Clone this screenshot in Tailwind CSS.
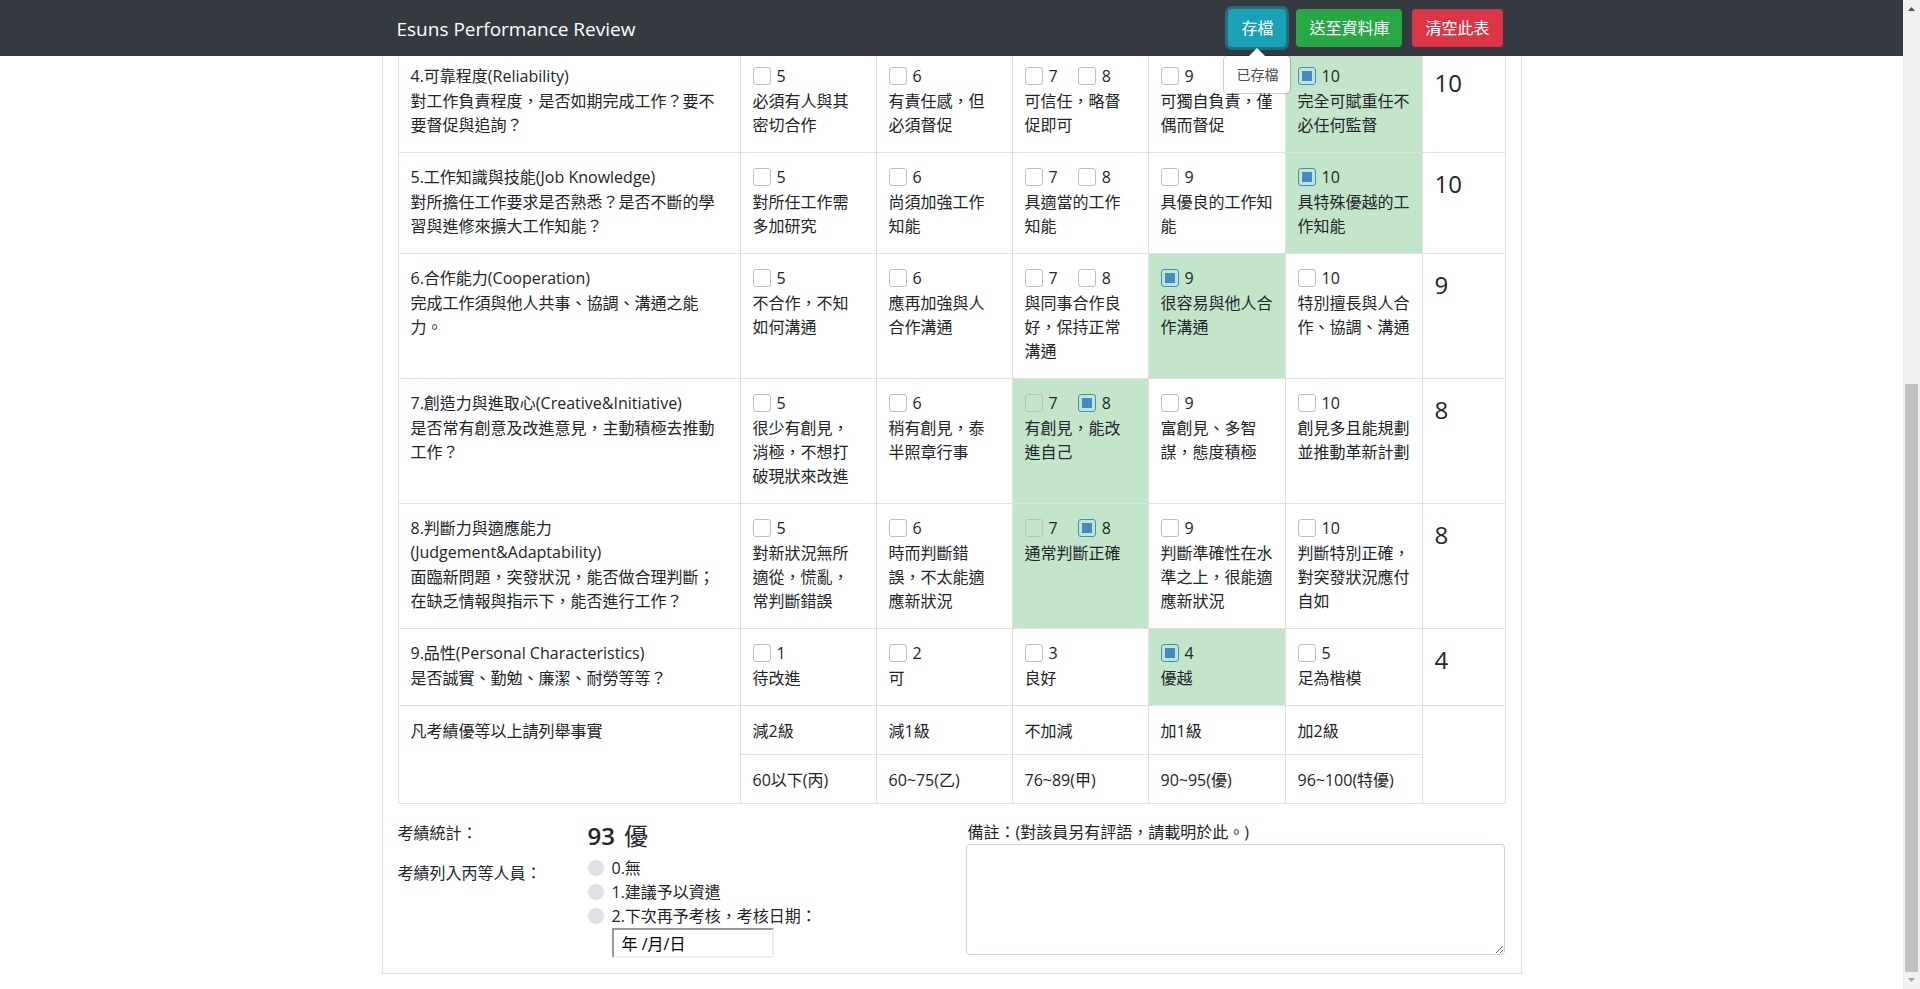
<!DOCTYPE html>
<html lang="zh-Hant">
<head>
<meta charset="utf-8">
<title>Esuns Performance Review</title>
<script src="https://cdn.jsdelivr.net/npm/@tailwindcss/browser@4"></script>
</head>
<body class="flex h-screen overflow-hidden bg-white font-['Open_Sans','Noto_Sans_CJK_TC',sans-serif] text-base leading-6 text-[#212529]">
<div class="flex min-w-0 flex-1 flex-col">
  <header class="relative z-10 h-14 shrink-0 bg-[#343a40]">
    <nav class="mx-auto flex h-full max-w-[1140px] items-center justify-between pr-[19px] pl-[15px]">
      <a href="#" class="pt-[2px] text-[19px] leading-[30px] text-white">Esuns Performance Review</a>
      <div class="flex gap-[10px]">
        <div class="relative">
          <button type="button" class="block h-[38px] rounded bg-[#17a2b8] px-[13px] text-white ring-3 ring-[#17a2b8]/50">存檔</button>
          <div role="tooltip" class="absolute top-[46px] left-1/2 -translate-x-1/2 rounded-[5px] border border-black/20 bg-white bg-clip-padding px-3 py-2 text-sm leading-[21px] whitespace-nowrap text-[#4b4f53]">
            <svg class="absolute -top-2 left-1/2 h-2 w-4 -translate-x-1/2" viewBox="0 0 16 8" aria-hidden="true"><path d="M0 8 8 0l8 8z" fill="#fff"/></svg>已存檔
          </div>
        </div>
        <button type="button" class="h-[38px] rounded bg-[#28a745] px-[13px] text-white">送至資料庫</button>
        <button type="button" class="h-[38px] rounded bg-[#dc3545] px-[13px] text-white">清空此表</button>
      </div>
    </nav>
  </header>
  <main class="mx-auto w-full max-w-[1140px] border-x border-b border-[#dee2e6] px-[15px] pb-[15px]">
    <table class="w-full table-fixed border-separate border-spacing-0 border-l border-[#dee2e6]">
      <colgroup><col><col class="w-[136px]"><col class="w-[136px]"><col class="w-[136px]"><col class="w-[137px]"><col class="w-[137px]"><col class="w-[83px]"></colgroup>
      <tbody id="rows"></tbody>
      <tbody class="[&_td]:border-r [&_td]:border-b [&_td]:border-[#dee2e6] [&_td]:px-3 [&_td]:pt-[13px] [&_td]:pb-[11px] [&_td]:align-top">
        <tr><td rowspan="2">凡考績優等以上請列舉事實</td><td>減2級</td><td>減1級</td><td>不加減</td><td>加1級</td><td>加2級</td><td rowspan="2"></td></tr>
        <tr><td>60以下(丙)</td><td>60~75(乙)</td><td>76~89(甲)</td><td>90~95(優)</td><td>96~100(特優)</td></tr>
      </tbody>
    </table>
    <div class="mt-[14px] flex">
      <div class="flex-1">
        <div class="flex"><div class="w-[190px] pt-[3px]">考績統計：</div><div class="flex gap-[9px] text-2xl leading-9"><b class="font-semibold">93</b><span>優</span></div></div>
        <fieldset class="mt-[2px] flex">
          <legend class="float-left w-[190px] pt-[5px]">考績列入丙等人員：</legend>
          <div>
            <label class="flex items-center gap-2"><input type="radio" name="grade" class="size-4 appearance-none rounded-full bg-[#dee2e6] checked:bg-[#007bff]">0.無</label>
            <label class="flex items-center gap-2"><input type="radio" name="grade" class="size-4 appearance-none rounded-full bg-[#dee2e6] checked:bg-[#007bff]">1.建議予以資遣</label>
            <label class="flex items-center gap-2"><input type="radio" name="grade" class="size-4 appearance-none rounded-full bg-[#dee2e6] checked:bg-[#007bff]">2.下次再予考核，考核日期：</label>
            <input type="text" aria-label="考核日期" value="年 /月/日" class="ml-6 block h-[30px] w-[162px] border-2 border-t-[#9a9a9a] border-r-[#eee] border-b-[#eee] border-l-[#9a9a9a] px-2 text-black">
          </div>
        </fieldset>
      </div>
      <div class="flex w-[540px] flex-col pr-px">
        <label for="remark" class="px-[2px] pt-[2px]">備註：(對該員另有評語，請載明於此。)</label>
        <textarea id="remark" class="h-[111px] w-full resize rounded border border-[#ced4da] px-3 py-1"></textarea>
      </div>
    </div>
  </main>
</div>
<div aria-hidden="true" class="flex w-[17px] shrink-0 flex-col items-center justify-between bg-[#f1f1f1]">
  <svg class="size-[17px]" viewBox="0 0 17 17"><path d="M5 11 8.500 7 12 11z" fill="#505050"/></svg>
  <div class="mt-auto h-[588px] w-[13px] bg-[#c1c1c1]"></div>
  <svg class="size-[17px]" viewBox="0 0 17 17"><path d="M5 6l3.500 4L12 6z" fill="#a3a3a3"/></svg>
</div>
<script>
// Each criterion: title, description, options ([marks, text]), chosen mark.
const criteria = [
  ['4.可靠程度(Reliability)', '對工作負責程度，是否如期完成工作？要不要督促與追詢？', [[[5], '必須有人與其密切合作'], [[6], '有責任感，但必須督促'], [[7, 8], '可信任，略督促即可'], [[9], '可獨自負責，僅偶而督促'], [[10], '完全可賦重任不必任何監督']], 10],
  ['5.工作知識與技能(Job Knowledge)', '對所擔任工作要求是否熟悉？是否不斷的學習與進修來擴大工作知能？', [[[5], '對所任工作需多加研究'], [[6], '尚須加強工作知能'], [[7, 8], '具適當的工作知能'], [[9], '具優良的工作知能'], [[10], '具特殊優越的工作知能']], 10],
  ['6.合作能力(Cooperation)', '完成工作須與他人共事、協調、溝通之能力。', [[[5], '不合作，不知如何溝通'], [[6], '應再加強與人合作溝通'], [[7, 8], '與同事合作良好，保持正常溝通'], [[9], '很容易與他人合作溝通'], [[10], '特別擅長與人合作、協調、溝通']], 9],
  ['7.創造力與進取心(Creative&Initiative)', '是否常有創意及改進意見，主動積極去推動工作？', [[[5], '很少有創見，消極，不想打破現狀來改進'], [[6], '稍有創見，泰半照章行事'], [[7, 8], '有創見，能改進自己'], [[9], '富創見、多智謀，態度積極'], [[10], '創見多且能規劃並推動革新計劃']], 8],
  ['8.判斷力與適應能力(Judgement&Adaptability)', '面臨新問題，突發狀況，能否做合理判斷；在缺乏情報與指示下，能否進行工作？', [[[5], '對新狀況無所適從，慌亂，常判斷錯誤'], [[6], '時而判斷錯誤，不太能適應新狀況'], [[7, 8], '通常判斷正確'], [[9], '判斷準確性在水準之上，很能適應新狀況'], [[10], '判斷特別正確，對突發狀況應付自如']], 8],
  ['9.品性(Personal Characteristics)', '是否誠實、勤勉、廉潔、耐勞等等？', [[[1], '待改進'], [[2], '可'], [[3], '良好'], [[4], '優越'], [[5], '足為楷模']], 4]
];
const cell = 'border-r border-b border-[#dee2e6] px-3 pb-[15px] align-top ';
const esc = s => s.replace(/&/g, '&amp;');
document.getElementById('rows').innerHTML = criteria.map(([title, text, options, score], r) => {
  const c = cell + (r ? 'pt-3' : 'pt-2');
  const tds = options.map(([marks, label]) => {
    const boxes = marks.map(m => `<label class="flex items-center gap-[6px]"><input type="checkbox" ${m === score ? 'checked' : ''} class="size-[18px] appearance-none rounded-[3px] border border-[#bbbfc4] checked:border-[#428bca] checked:bg-[#428bca] checked:bg-clip-content checked:p-[3px]">${m}</label>`).join('');
    return `<td class="${c}${marks.includes(score) ? ' bg-[#c3e6cb]' : ''}"><div class="flex gap-5">${boxes}</div><div class="mt-px">${label}</div></td>`;
  }).join('');
  return `<tr><td class="${c}"><div>${esc(title)}</div><div class="mt-px">${text}</div></td>${tds}<td class="${c} text-2xl leading-9"><div class="mt-px">${score}</div></td></tr>`;
}).join('');
</script>
</body>
</html>
